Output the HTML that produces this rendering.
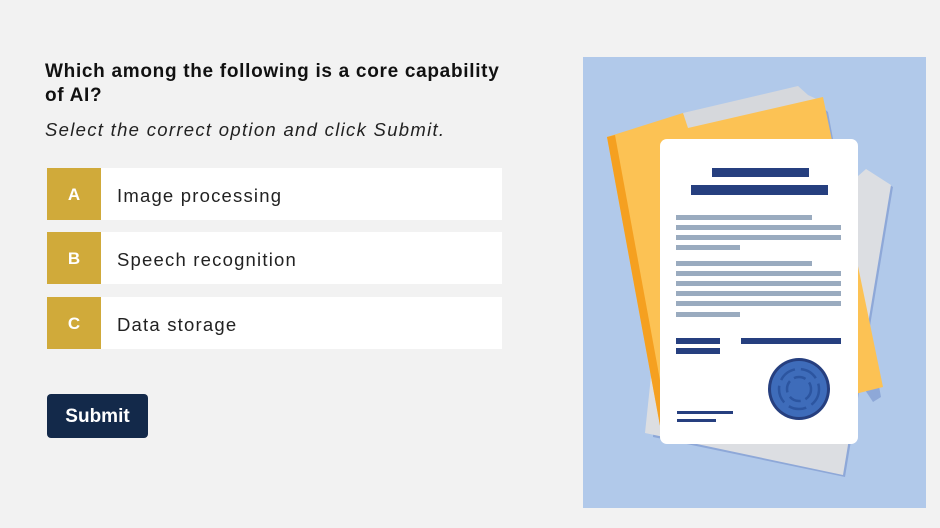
<!DOCTYPE html>
<html><head><meta charset="utf-8"><style>
body{margin:0;width:940px;height:528px;background:#f2f2f2;font-family:"Liberation Sans",sans-serif;position:relative;overflow:hidden}
.q{position:absolute;left:45px;top:60px;width:520px;font-weight:bold;font-size:19px;line-height:24px;color:#111;letter-spacing:0.7px}
.s{position:absolute;left:45px;top:119px;font-style:italic;font-size:18.5px;color:#222;letter-spacing:1.3px}
.o{position:absolute;left:47px;width:455px;height:52px;background:#fff}
.o b{position:absolute;left:0;top:0;width:54px;height:52px;background:#d0aa3a;color:#fff;font-size:17px;line-height:54px;text-align:center}
.o span{position:absolute;left:70px;top:0;line-height:56px;font-size:18.5px;color:#222;letter-spacing:1.2px}
.btn{position:absolute;left:47px;top:394px;width:101px;height:44px;background:#13294a;border-radius:4px;color:#fff;font-weight:bold;font-size:19px;line-height:45px;text-align:center}
svg{position:absolute;left:583px;top:57px}
</style></head><body>
<div class="q">Which among the following is a core capability<br>of AI?</div>
<div class="s">Select the correct option and click Submit.</div>
<div class="o" style="top:168px"><b>A</b><span>Image processing</span></div>
<div class="o" style="top:232px"><b>B</b><span>Speech recognition</span></div>
<div class="o" style="top:297px"><b>C</b><span>Data storage</span></div>
<div class="btn">Submit</div>
<svg width="343" height="451" viewBox="0 0 343 451">
<rect width="343" height="451" fill="#b1c9ea"/>
<polygon points="285,115 310,130 262,420 70,380 75,300" fill="#8ea8d8"/>
<polygon points="283,112 308,128 260,418 62,376 70,300" fill="#dcdee2"/>
<polygon points="100,58 215,30 226,40 245,55 298,340 290,345" fill="#8ea8d8"/>
<polygon points="100,56 215,29 225,38 240,45 280,300 120,120" fill="#d6d8dc"/>
<polygon points="24,80 100,56 105,71 240,40 300,330 80,385" fill="#fcc254"/>
<polygon points="24,80 32,78 88,383 80,385" fill="#f5a020"/>
<rect x="77" y="82" width="198" height="305" rx="7" fill="#fff"/>
<g fill="#263f7f">
<rect x="129" y="111" width="97" height="9"/><rect x="108" y="128" width="137" height="10"/>
<rect x="93" y="281" width="44" height="6"/><rect x="93" y="291" width="44" height="6"/><rect x="158" y="281" width="100" height="6"/>
<rect x="94" y="354" width="56" height="3"/><rect x="94" y="362" width="39" height="3"/>
</g>
<g fill="#9aabbf">
<rect x="93" y="158" width="136" height="5"/><rect x="93" y="168" width="165" height="5"/><rect x="93" y="178" width="165" height="5"/><rect x="93" y="188" width="64" height="5"/>
<rect x="93" y="204" width="136" height="5"/><rect x="93" y="214" width="165" height="5"/><rect x="93" y="224" width="165" height="5"/><rect x="93" y="234" width="165" height="5"/><rect x="93" y="244" width="165" height="5"/><rect x="93" y="255" width="64" height="5"/>
</g>
<circle cx="216" cy="332" r="31" fill="#263f7f"/>
<circle cx="216" cy="332" r="28" fill="#3e6cba"/>
<g fill="none" stroke="#2c55a0" stroke-width="2.5">
<circle cx="216" cy="332" r="20" stroke-dasharray="18 6"/>
<circle cx="216" cy="332" r="12" stroke-dasharray="12 5"/>
</g>
</svg>
</body></html>
